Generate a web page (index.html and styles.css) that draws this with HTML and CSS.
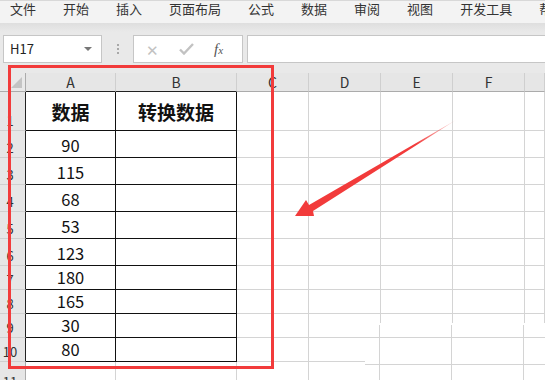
FILE: index.html
```html
<html>
<head>
    <meta charset="utf-8">
    <link rel="stylesheet" href="styles.css">
</head>
<body>
    <div class="tabs">
        <span>文件</span><span>开始</span><span>插入</span><span>页面布局</span><span>公式</span><span>数据</span><span>审阅</span><span>视图</span><span>开发工具</span><span>帮助</span>
    </div>

    <div class="formula-bar">
        <div class="name-box">H17<i class="caret"></i></div>
        <div class="dots"><b></b><b></b><b></b></div>
        <div class="fx-box">
            <span class="ic off">✕</span>
            <svg class="check" width="15" height="12" viewBox="0 0 15 12"><path d="M1 6.5 L5 10.5 L14 1" fill="none" stroke="#c2c2c2" stroke-width="2.4"/></svg>
            <span class="ic fx">f<small>x</small></span>
        </div>
        <div class="input"></div>
    </div>

    <div class="sheet" id="sheet"></div>

    <div class="frame"></div>

    <div class="patch">
        <div class="pl v" style="left:14px"></div>
        <div class="pl v" style="left:86px"></div>
        <div class="pl v" style="left:158px"></div>
        <div class="pl h" style="top:14px"></div>
        <div class="pl h" style="top:41px"></div>
    </div>

    <svg class="arrow" width="545" height="380" viewBox="0 0 545 380">
        <defs>
            <linearGradient id="fade" x1="295" y1="216" x2="456" y2="120" gradientUnits="userSpaceOnUse">
                <stop offset="0" stop-color="#f23b3b"/>
                <stop offset="0.75" stop-color="#f23b3b"/>
                <stop offset="1" stop-color="#f23b3b" stop-opacity="0.15"/>
            </linearGradient>
        </defs>
        <polygon fill="url(#fade)" points="295,216 306,200 309,205 456,120 313,211 314,216"/>
    </svg>

    <script>
        let cols = ["A", "B", "C", "D", "E", "F", ""];
        let data = [["数据", "转换数据"], ["90"], ["115"], ["68"], ["53"], ["123"], ["180"], ["165"], ["30"], ["80"], []];
        let sheet = document.getElementById("sheet");
        let html = '<div class="corner"><i></i></div>';

        for (let c = 0; c < cols.length; c++) {
            let k = c < 2 ? " head in" : " head";
            html += '<div class="' + k + '">' + cols[c] + '</div>';
        }

        for (let r = 0; r < data.length; r++) {
            let row = r + 1;
            let size = row == 1 ? " r1" : (row <= 6 ? " r27" : (row <= 10 ? " r24" : " r11"));
            let inTable = row <= 10;
            html += '<div class="rowhead' + size + (inTable ? " in" : "") + '">' + row + '</div>';
            for (let c = 0; c < cols.length; c++) {
                let k = "cell" + size;
                if (inTable && c < 2) k += " in";
                if (row == 1) k += " title";
                html += '<div class="' + k + '">' + (data[r][c] || "") + '</div>';
            }
        }
        sheet.innerHTML = html;
    </script>
</body>
</html>
```

FILE: styles.css
```css
body {
    margin: 0;
    width: 545px;
    height: 380px;
    overflow: hidden;
    position: relative;
    background: #fff;
    font-family: "Noto Sans CJK SC", "Noto Sans", sans-serif;
    color: #222;
}

.tabs {
    height: 22px;
    background: #f3f3f3;
    border-top: 1px solid #d8d8d8;
    display: flex;
    gap: 27px;
    padding-left: 10px;
    font-size: 13px;
    line-height: 15px;
    color: #333;
    white-space: nowrap;
    overflow: hidden;
}

.formula-bar {
    height: 28px;
    padding: 12px 0 10px 3px;
    background: linear-gradient(#dedede, #e9e9e9 9px, #e9e9e9);
    display: flex;
    align-items: stretch;
}

.name-box {
    width: 99px;
    box-sizing: border-box;
    background: #fff;
    border: 1px solid #c6c6c6;
    font-size: 13px;
    line-height: 26px;
    padding-left: 6px;
    position: relative;
}

.caret {
    position: absolute;
    right: 9px;
    top: 11px;
    border-left: 4px solid transparent;
    border-right: 4px solid transparent;
    border-top: 4px solid #777;
}

.dots {
    width: 31px;
    display: flex;
    flex-direction: column;
    align-items: center;
    justify-content: center;
    gap: 2px;
}

.dots b {
    width: 2px;
    height: 2px;
    background: #a8a8a8;
}

.fx-box {
    width: 110px;
    box-sizing: border-box;
    background: #fff;
    border: 1px solid #c6c6c6;
    display: flex;
    align-items: center;
    padding-left: 12px;
    gap: 22px;
}

.ic {
    font-size: 15px;
    line-height: 1;
}

.off {
    color: #c2c2c2;
}

.check {
    margin-left: -2px;
    margin-right: -2px;
}

.fx {
    font-family: "Liberation Serif", serif;
    font-style: italic;
    font-size: 15px;
    color: #555;
}

.fx small {
    font-size: 11px;
}

.input {
    flex: 1;
    margin-left: 4px;
    background: #fff;
    border: 1px solid #c6c6c6;
    border-right: none;
}

.sheet {
    display: grid;
    grid-template-columns: 26px 90px 121px 72px 72px 72px 72px 1fr;
    grid-template-rows: 19px 39px repeat(5, 27px) repeat(4, 24px) 30px;
    background: #e9e9e9;
}

.sheet > div {
    box-sizing: border-box;
}

.corner {
    border-right: 1px solid #ababab;
    border-bottom: 1px solid #ababab;
    position: relative;
}

.corner i {
    position: absolute;
    right: 3px;
    bottom: 3px;
    width: 11px;
    height: 11px;
    background: #c4c4c4;
    clip-path: polygon(100% 0, 100% 100%, 0 100%);
}

.head {
    background: #e6e6e6;
    border-right: 1px solid #cfcfcf;
    border-bottom: 1px solid #ababab;
    font-size: 14px;
    line-height: 18px;
    text-align: center;
    color: #333;
}

.head.in {
    border-bottom-color: #222;
}

.rowhead {
    background: #e6e6e6;
    border-right: 1px solid #ababab;
    border-bottom: 1px solid #cfcfcf;
    font-size: 13px;
    color: #333;
    display: flex;
    align-items: flex-end;
    justify-content: center;
    padding-right: 5px;
    padding-bottom: 1px;
    line-height: 16px;
}

.rowhead.in {
    border-right-color: #222;
}

.cell {
    background: #fff;
    border-right: 1px solid #d4d4d4;
    border-bottom: 1px solid #d4d4d4;
    display: flex;
    align-items: flex-end;
    justify-content: center;
    font-size: 16.5px;
    line-height: 20px;
    padding-bottom: 2px;
    color: #111;
}

.cell.in {
    border-right-color: #111;
    border-bottom-color: #111;
}

.cell.title {
    font-size: 19px;
    font-weight: bold;
    line-height: 24px;
    padding-bottom: 6px;
}

.frame {
    position: absolute;
    left: 8px;
    top: 65px;
    width: 260px;
    height: 298px;
    border: 3px solid #f23b3b;
}

.patch {
    position: absolute;
    left: 365px;
    top: 323px;
    width: 180px;
    height: 57px;
    background: #fff;
}

.pl {
    position: absolute;
    background: #d4d4d4;
}

.pl.v {
    top: 2px;
    bottom: 0;
    width: 1px;
}

.pl.h {
    left: 0;
    right: 0;
    height: 1px;
}

.arrow {
    position: absolute;
    left: 0;
    top: 0;
}
```
